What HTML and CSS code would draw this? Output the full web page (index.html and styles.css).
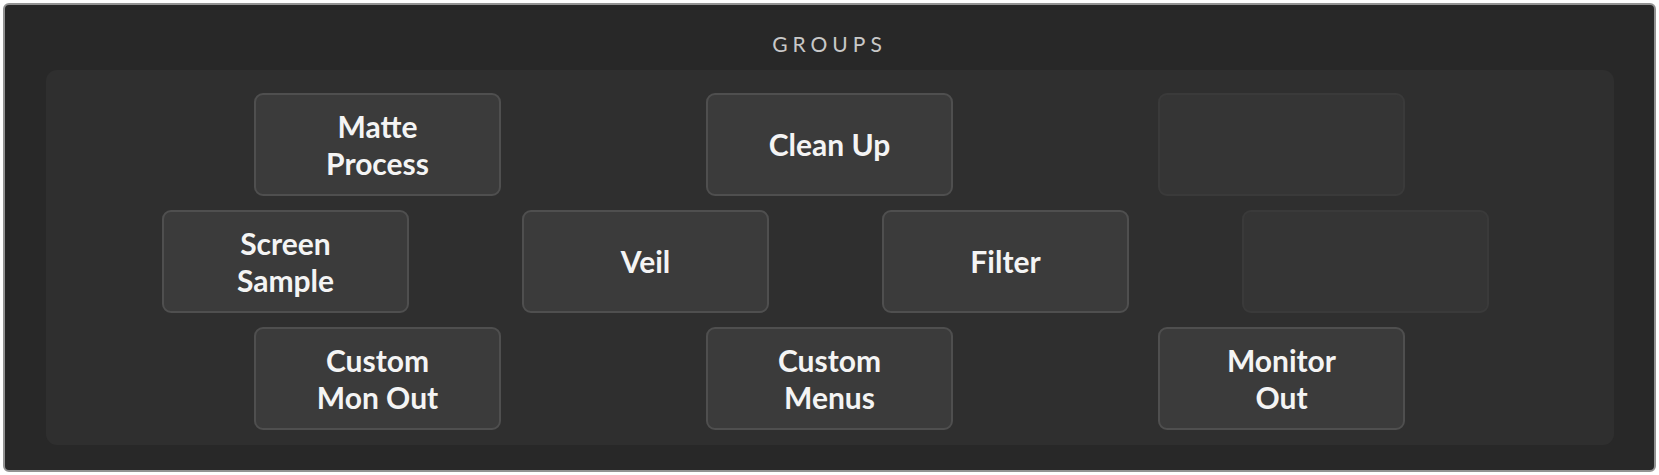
FILE: index.html
```html
<!DOCTYPE html>
<html>
<head>
<meta charset="utf-8">
<link rel="stylesheet" href="styles.css">
</head>
<body>
<div class="panel">
  <div class="panel-title">GROUPS</div>
  <div class="groups">
    <div class="row row-wide">
      <div class="btn">Matte<br>Process</div>
      <div class="btn">Clean Up</div>
      <div class="btn btn-empty"></div>
    </div>
    <div class="row row-narrow">
      <div class="btn">Screen<br>Sample</div>
      <div class="btn">Veil</div>
      <div class="btn">Filter</div>
      <div class="btn btn-empty"></div>
    </div>
    <div class="row row-wide">
      <div class="btn">Custom<br>Mon Out</div>
      <div class="btn">Custom<br>Menus</div>
      <div class="btn">Monitor<br>Out</div>
    </div>
  </div>
</div>
</body>
</html>
```
FILE: styles.css
```css
html, body {
  margin: 0;
  padding: 0;
  background: #ffffff;
}
body {
  padding: 3px;
  font-family: Lato, "Open Sans", sans-serif;
}
.panel {
  box-sizing: border-box;
  width: 1653px;
  height: 469px;
  background: #282828;
  border: 2px solid #939393;
  border-radius: 6px;
  display: flex;
  flex-direction: column;
  align-items: center;
  padding-bottom: 25px;
}
.panel-title {
  box-sizing: border-box;
  height: 65px;
  padding-top: 12px;
  display: flex;
  align-items: center;
  justify-content: center;
  color: #c8c8c8;
  font-size: 21px;
  font-weight: 400;
  letter-spacing: 5px;
}
.groups {
  box-sizing: border-box;
  width: 1568px;
  height: 375px;
  background: #2f2f2f;
  border-radius: 11px;
  padding: 23px 0 15px;
  display: flex;
  flex-direction: column;
  gap: 14px;
}
.row {
  display: flex;
  justify-content: center;
}
.row-wide {
  gap: 205px;
}
.row-narrow {
  gap: 113px;
  padding-right: 8px;
}
.btn {
  box-sizing: border-box;
  width: 247px;
  height: 103px;
  background: #3b3b3b;
  border: 2px solid #4f4f4f;
  border-radius: 9px;
  display: flex;
  align-items: center;
  justify-content: center;
  text-align: center;
  color: #f4f4f4;
  font-size: 30px;
  font-weight: 700;
  line-height: 37px;
}
.btn-empty {
  background: #353535;
  border-color: #3a3a3a;
}
```
